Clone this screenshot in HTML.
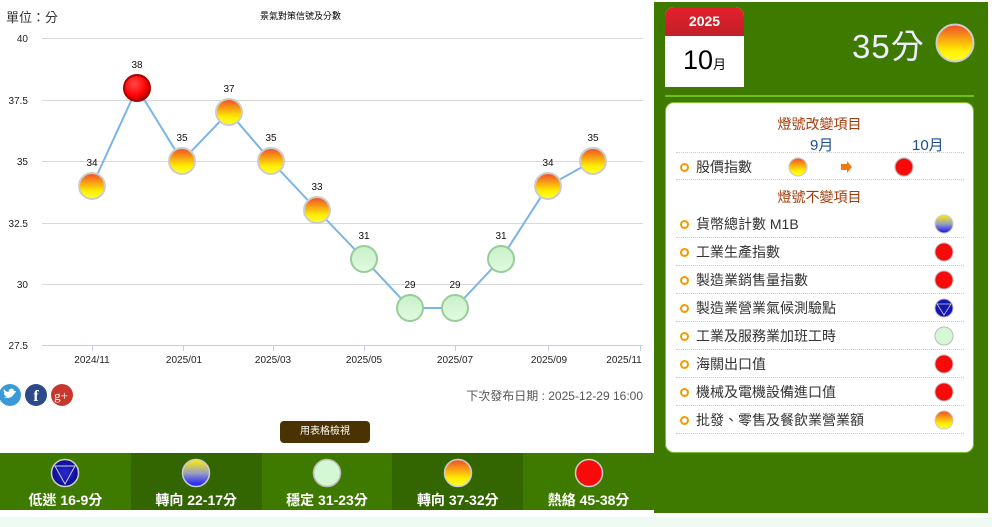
<!DOCTYPE html>
<html><head><meta charset="utf-8">
<style>
*{margin:0;padding:0;box-sizing:border-box}
body{width:992px;height:527px;overflow:hidden;background:#eefaf2;font-family:"Liberation Sans","Noto Sans CJK TC",sans-serif;position:relative}
.main{position:absolute;left:0;top:0;width:992px;height:517px;background:#fff}
.legend{position:absolute;left:0;top:453px;width:654px;height:57px;display:flex}
.legend div{flex:1;color:#fff;font-size:14px;font-weight:bold;text-align:center;position:relative}
.legend div svg{position:absolute;left:50%;margin-left:-15px;top:5px}
.legend div span{position:absolute;left:0;right:0;top:37px}
.panel{position:absolute;left:654px;top:2px;width:334px;height:511px;background:#3f7a00}
.cal{position:absolute;left:11px;top:5px;width:79px;height:80px;background:#fff;border-radius:9px 9px 0 0;overflow:hidden}
.cal .top{height:29px;background:linear-gradient(#e5212b,#c0202a);color:#fff;font-size:14px;font-weight:bold;text-align:center;line-height:29px}
.cal .d{text-align:center;font-size:27px;color:#000;line-height:48px}
.cal .d small{font-size:13px}
.score{position:absolute;left:198px;top:18px;color:#eef;font-size:33px;letter-spacing:1px}
.hr{position:absolute;left:11px;top:93px;width:309px;height:2px;background:#6cbf1c}
.box{position:absolute;left:11px;top:100px;width:309px;height:351px;background:#fff;border-radius:9px;border:1px solid #7cc02a}
.box .h{position:absolute;left:0;right:0;text-align:center;color:#a33a0a;font-size:14px}
.row{position:absolute;left:10px;width:288px;height:28px;border-bottom:1px dotted #ccc;font-size:14px;color:#333;line-height:28px;padding-left:20px}
.row:before{content:"";position:absolute;left:4px;top:10px;width:9px;height:9px;border-radius:50%;border:2.5px solid #f39a00;box-sizing:border-box}
.row svg{position:absolute;right:10px;top:4px}
</style></head><body>
<div class="main">
<svg width="654" height="410" style="position:absolute;left:0;top:0" font-family="Liberation Sans,Noto Sans CJK TC,sans-serif">
<defs>
<radialGradient id="r" cx="40%" cy="35%" r="65%"><stop offset="0" stop-color="#ff4a4a"/><stop offset=".7" stop-color="#f00"/><stop offset="1" stop-color="#a00"/></radialGradient>
<linearGradient id="o" x1="0" y1="0" x2="0" y2="1"><stop offset="0" stop-color="#f04a2a"/><stop offset=".7" stop-color="#ffee00"/><stop offset="1" stop-color="#ffff30"/></linearGradient>
<linearGradient id="g" x1="0" y1="0" x2="0" y2="1"><stop offset="0" stop-color="#c8f0c8"/><stop offset="1" stop-color="#e0fbe0"/></linearGradient>
</defs>
<text x="6" y="22" font-size="13" fill="#333">單位：分</text>
<text x="260" y="19" font-size="9" fill="#000">景氣對策信號及分數</text>
<g stroke="#d8d8d8" stroke-width="1">
<line x1="42" y1="38.5" x2="643" y2="38.5"/><line x1="42" y1="100.5" x2="643" y2="100.5"/><line x1="42" y1="161.5" x2="643" y2="161.5"/><line x1="42" y1="223.5" x2="643" y2="223.5"/><line x1="42" y1="284.5" x2="643" y2="284.5"/>
</g>
<line x1="42" y1="345.5" x2="643" y2="345.5" stroke="#c0d0e0"/>
<g stroke="#c0d0e0"><line x1="92.5" y1="345" x2="92.5" y2="351"/><line x1="183.5" y1="345" x2="183.5" y2="351"/><line x1="273.5" y1="345" x2="273.5" y2="351"/><line x1="364.5" y1="345" x2="364.5" y2="351"/><line x1="455.5" y1="345" x2="455.5" y2="351"/><line x1="548.5" y1="345" x2="548.5" y2="351"/><line x1="640.5" y1="345" x2="640.5" y2="351"/></g>
<g font-size="10" fill="#222" text-anchor="end"><text x="28" y="42">40</text><text x="28" y="104">37.5</text><text x="28" y="165">35</text><text x="28" y="227">32.5</text><text x="28" y="288">30</text><text x="28" y="349">27.5</text></g>
<g font-size="10" fill="#222" text-anchor="middle"><text x="92" y="363">2024/11</text><text x="184" y="363">2025/01</text><text x="273" y="363">2025/03</text><text x="364" y="363">2025/05</text><text x="455" y="363">2025/07</text><text x="549" y="363">2025/09</text><text x="624" y="363">2025/11</text></g>
<polyline fill="none" stroke="#7ab4e8" stroke-width="2" points="92,186 137,88 182,161 229,112 271,161 317,210 364,259 410,308 455,308 501,259 548,186 593,161"/>
<g stroke="#ccc" stroke-width="2">
<circle cx="92" cy="186" r="13" fill="url(#o)"/><circle cx="137" cy="88" r="13" fill="url(#r)" stroke="#a00"/><circle cx="182" cy="161" r="13" fill="url(#o)"/><circle cx="229" cy="112" r="13" fill="url(#o)"/><circle cx="271" cy="161" r="13" fill="url(#o)"/><circle cx="317" cy="210" r="13" fill="url(#o)"/>
<circle cx="364" cy="259" r="13" fill="url(#g)" stroke="#9c9"/><circle cx="410" cy="308" r="13" fill="url(#g)" stroke="#9c9"/><circle cx="455" cy="308" r="13" fill="url(#g)" stroke="#9c9"/><circle cx="501" cy="259" r="13" fill="url(#g)" stroke="#9c9"/>
<circle cx="548" cy="186" r="13" fill="url(#o)"/><circle cx="593" cy="161" r="13" fill="url(#o)"/>
</g>
<g font-size="10" fill="#111" text-anchor="middle"><text x="92" y="166">34</text><text x="137" y="68">38</text><text x="182" y="141">35</text><text x="229" y="92">37</text><text x="271" y="141">35</text><text x="317" y="190">33</text><text x="364" y="239">31</text><text x="410" y="288">29</text><text x="455" y="288">29</text><text x="501" y="239">31</text><text x="548" y="166">34</text><text x="593" y="141">35</text></g>
<circle cx="10" cy="395" r="11" fill="#3a9ad8"/><path d="M4 397c3 2 8 1 10-3 1-1 2-2 2-3l-2 0c0-2-2-3-4-2-1 1-2 2-1 3-2 0-4-1-5-3-1 2 0 4 1 4l-1 0c0 2 1 3 3 3-1 1-2 1-3 1z" fill="#fff"/>
<circle cx="36" cy="395" r="11" fill="#2c4a8a"/><text x="36" y="401" font-size="16" font-weight="bold" fill="#fff" text-anchor="middle" font-family="Liberation Serif,serif">f</text>
<circle cx="62" cy="395" r="11" fill="#c8372e"/><text x="61" y="400" font-size="13" fill="#fff" text-anchor="middle" font-family="Liberation Serif,serif">g+</text>
<text x="643" y="400" font-size="12" fill="#555" text-anchor="end">下次發布日期 : 2025-12-29 16:00</text>
</svg>
<div style="position:absolute;left:280px;top:421px;width:90px;height:22px;background:#4a3300;border-radius:4px;color:#fff;font-size:10px;text-align:center;line-height:22px">用表格檢視</div>
<div class="legend">
<div style="background:#3f7a00"><svg width="30" height="30"><defs><radialGradient id="bl2"><stop offset="0" stop-color="#2a2ad0"/><stop offset="1" stop-color="#0a0a90"/></radialGradient></defs><circle cx="15" cy="15" r="13.5" fill="url(#bl2)" stroke="#ccc" stroke-width="1.5"/><path d="M5 8H25L15 26Z" fill="none" stroke="#ccd" stroke-width="1"/></svg><span>低迷 16-9分</span></div>
<div style="background:#336600"><svg width="30" height="30"><defs><linearGradient id="b2" x1="0" y1="0" x2="0" y2="1"><stop offset="0" stop-color="#ffee00"/><stop offset=".5" stop-color="#9aa0c0"/><stop offset="1" stop-color="#1010ff"/></linearGradient></defs><circle cx="15" cy="15" r="13.5" fill="url(#b2)" stroke="#ccc" stroke-width="1.5"/></svg><span>轉向 22-17分</span></div>
<div style="background:#3f7a00"><svg width="30" height="30"><circle cx="15" cy="15" r="13.5" fill="#d4f7d4" stroke="#bbb" stroke-width="1.5"/></svg><span>穩定 31-23分</span></div>
<div style="background:#336600"><svg width="30" height="30"><defs><linearGradient id="o2" x1="0" y1="0" x2="0" y2="1"><stop offset="0" stop-color="#f04a2a"/><stop offset=".7" stop-color="#ffee00"/><stop offset="1" stop-color="#ffff30"/></linearGradient></defs><circle cx="15" cy="15" r="13.5" fill="url(#o2)" stroke="#ccc" stroke-width="1.5"/></svg><span>轉向 37-32分</span></div>
<div style="background:#3f7a00"><svg width="30" height="30"><circle cx="15" cy="15" r="13.5" fill="#f80a0a" stroke="#ccc" stroke-width="1.5"/></svg><span>熱絡 45-38分</span></div>
</div>
<div class="panel">
<div class="cal"><div class="top">2025</div><div class="d">10<small>月</small></div></div>
<div class="score">35分</div>
<svg width="42" height="42" style="position:absolute;left:280px;top:20px"><defs><linearGradient id="o3" x1="0" y1="0" x2="0" y2="1"><stop offset="0" stop-color="#f04a2a"/><stop offset=".7" stop-color="#ffee00"/><stop offset="1" stop-color="#ffff30"/></linearGradient></defs><circle cx="21" cy="21" r="18.5" fill="url(#o3)" stroke="#ccc" stroke-width="2"/></svg>
<div class="hr"></div>
<div class="box">
<div class="h" style="top:11px">燈號改變項目</div>
<div style="position:absolute;left:144px;top:31px;color:#1a4f8a;font-size:15px">9月</div>
<div style="position:absolute;left:246px;top:31px;color:#1a4f8a;font-size:15px">10月</div>
<div class="row" style="top:49px;border-top:1px dotted #ccc">股價指數
<svg width="220" height="22" style="right:12px;top:3px;position:absolute"><defs><linearGradient id="o4" x1="0" y1="0" x2="0" y2="1"><stop offset="0" stop-color="#f04a2a"/><stop offset=".7" stop-color="#ffee00"/><stop offset="1" stop-color="#ffff30"/></linearGradient></defs><circle cx="66" cy="11" r="9" fill="url(#o4)" stroke="#ccc" stroke-width="1.2"/><path d="M109 8h6v-3l5 6-5 6v-3h-6z" fill="#f07a10"/><circle cx="172" cy="11" r="9" fill="#f80a0a" stroke="#bbb" stroke-width="1.2"/></svg></div>
<div class="h" style="top:84px">燈號不變項目</div>
<div class="row" style="top:107px">貨幣總計數 M1B<svg width="20" height="20"><circle cx="10" cy="10" r="9" fill="url(#b2)" stroke="#ccc"/></svg></div>
<div class="row" style="top:135px">工業生產指數<svg width="20" height="20"><circle cx="10" cy="10" r="9" fill="#f80a0a" stroke="#bbb"/></svg></div>
<div class="row" style="top:163px">製造業銷售量指數<svg width="20" height="20"><circle cx="10" cy="10" r="9" fill="#f80a0a" stroke="#bbb"/></svg></div>
<div class="row" style="top:191px">製造業營業氣候測驗點<svg width="20" height="20"><circle cx="10" cy="10" r="9" fill="#1515b0" stroke="#bbb"/><path d="M3 6H17L10 17Z" fill="none" stroke="#ccd" stroke-width=".8"/></svg></div>
<div class="row" style="top:219px">工業及服務業加班工時<svg width="20" height="20"><circle cx="10" cy="10" r="9" fill="#d4f7d4" stroke="#bbb"/></svg></div>
<div class="row" style="top:247px">海關出口值<svg width="20" height="20"><circle cx="10" cy="10" r="9" fill="#f80a0a" stroke="#bbb"/></svg></div>
<div class="row" style="top:275px">機械及電機設備進口值<svg width="20" height="20"><circle cx="10" cy="10" r="9" fill="#f80a0a" stroke="#bbb"/></svg></div>
<div class="row" style="top:303px">批發、零售及餐飲業營業額<svg width="20" height="20"><circle cx="10" cy="10" r="9" fill="url(#o4)" stroke="#ccc"/></svg></div>
</div>
</div>
</div>
</body></html>
